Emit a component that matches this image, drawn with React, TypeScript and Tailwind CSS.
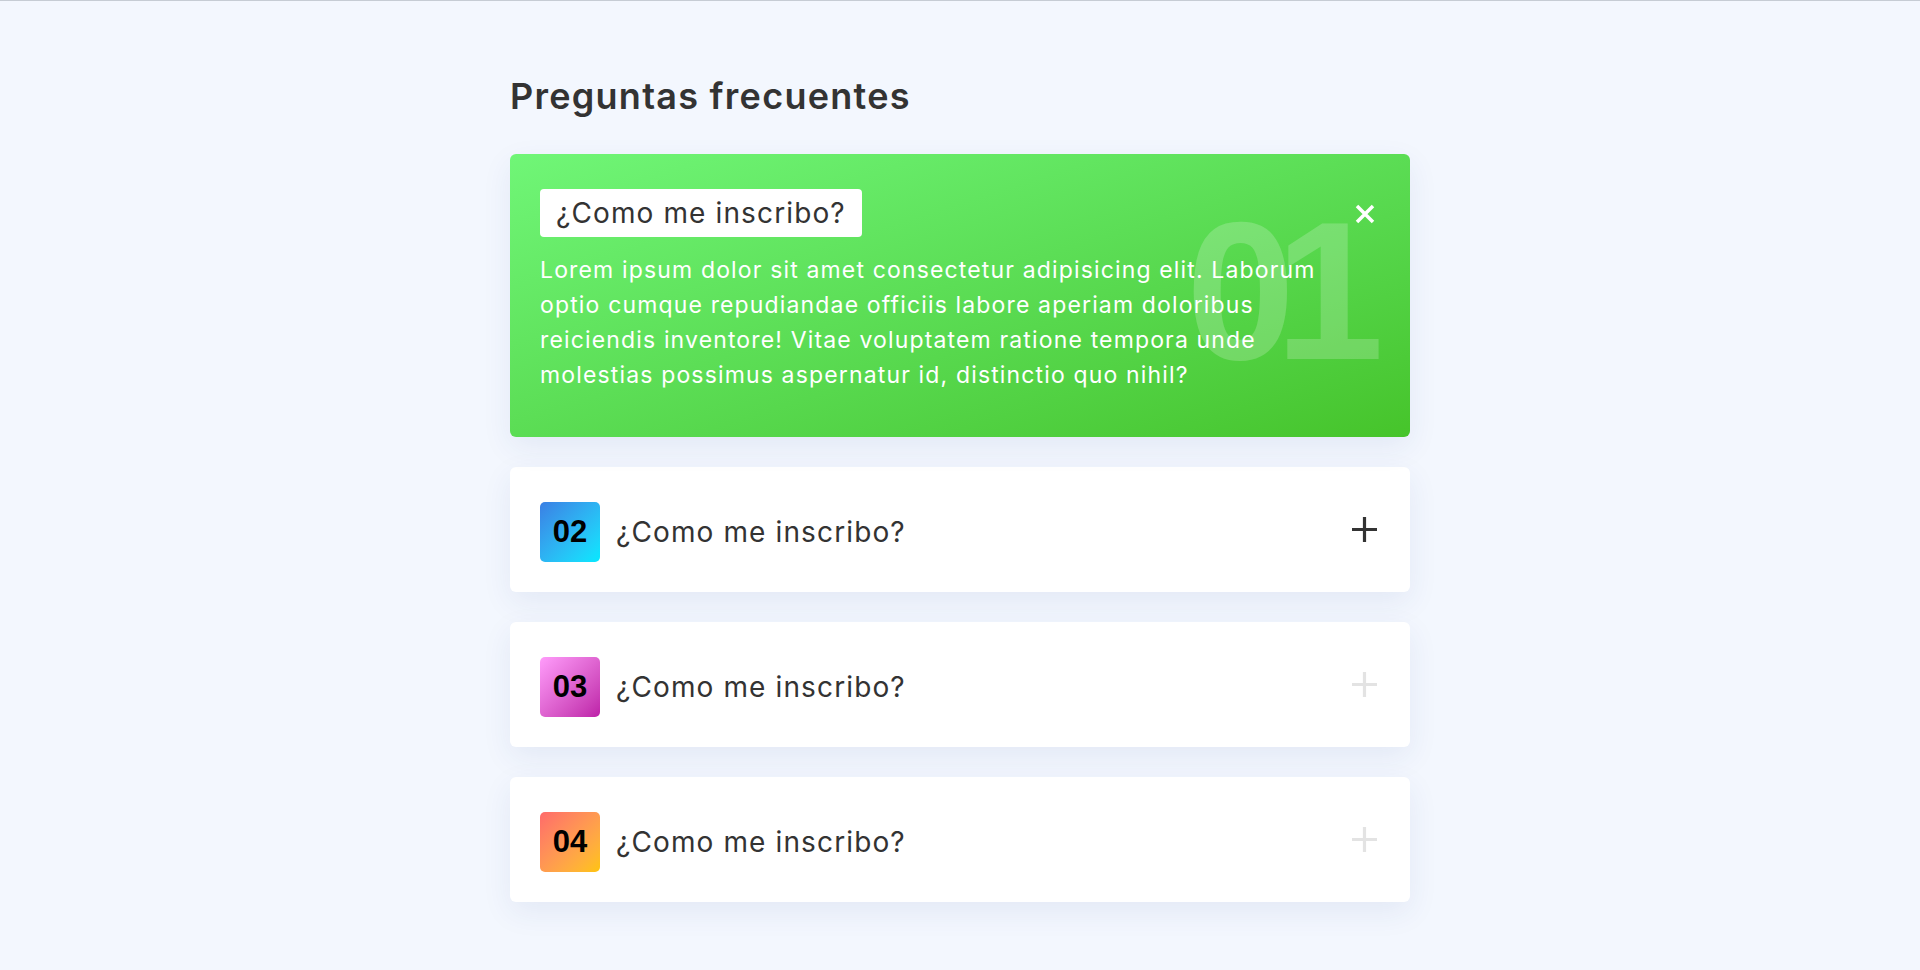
import { useState } from 'react';

type Faq = {
  id: string;
  question: string;
  answer: string[];
  badge: string;
};

const faqs: Faq[] = [
  {
    id: '01',
    question: '¿Como me inscribo?',
    answer: [
      'Lorem ipsum dolor sit amet consectetur adipisicing elit. Laborum',
      'optio cumque repudiandae officiis labore aperiam doloribus',
      'reiciendis inventore! Vitae voluptatem ratione tempora unde',
      'molestias possimus aspernatur id, distinctio quo nihil?',
    ],
    badge: 'bg-gradient-to-br from-[#6ef576] to-[#47c52c]',
  },
  {
    id: '02',
    question: '¿Como me inscribo?',
    answer: [],
    badge: 'bg-gradient-to-br from-[#3a7fe4] to-[#00e9ff]',
  },
  {
    id: '03',
    question: '¿Como me inscribo?',
    answer: [],
    badge: 'bg-gradient-to-br from-[#ff9cfb] to-[#bd1fa8]',
  },
  {
    id: '04',
    question: '¿Como me inscribo?',
    answer: [],
    badge: 'bg-gradient-to-br from-[#ff6a6a] to-[#ffc400]',
  },
];

const CloseIcon = () => (
  <svg width="22" height="22" viewBox="0 0 22 22">
    <path d="M3 3 L19 19 M19 3 L3 19" stroke="white" strokeWidth="3.5" strokeLinecap="butt" />
  </svg>
);

const PlusIcon = ({ dark }: { dark: boolean }) => (
  <svg width="25" height="25" viewBox="0 0 25 25">
    <path d="M12.5 0 V25 M0 12.5 H25" stroke={dark ? '#333333' : '#e3e3e3'} strokeWidth="3.2" />
  </svg>
);

const App = () => {
  const [open, setOpen] = useState('01');

  return (
    <div className="min-h-screen bg-[#f3f7fe] border-t border-[#c6ccd4] font-['Inter','Open_Sans',sans-serif]">
      <main className="w-[900px] mx-auto pt-[71px] pb-16">
        <h2 className="text-[36px] leading-[48px] font-semibold tracking-[0.035em] text-[#333333] mb-[34px]">
          Preguntas frecuentes
        </h2>

        <div className="flex flex-col gap-[30px]">
          {faqs.map((faq, i) =>
            open === faq.id ? (
              <div
                key={faq.id}
                className="relative overflow-hidden rounded-md bg-gradient-to-br from-[#70f677] to-[#46c42a] px-[30px] pt-[35px] pb-[44px] shadow-[0_10px_30px_rgba(40,60,140,0.08)]"
              >
                {/* big faded number behind the answer */}
                <span
                  aria-hidden="true"
                  className="absolute right-[46px] top-[40px] text-[196px] leading-none font-bold text-white/20 tracking-[-20px] font-['Liberation_Sans',sans-serif] select-none"
                >
                  {faq.id}
                </span>
                <button
                  className="absolute right-[34px] top-[49px]"
                  onClick={() => setOpen('')}
                >
                  <CloseIcon />
                </button>
                <div className="relative">
                  <h3 className="inline-block bg-white rounded-sm px-4 h-12 leading-[48px] text-[28px] tracking-[0.04em] text-[#333333]">
                    {faq.question}
                  </h3>
                  <p className="mt-[16px] text-[23px] leading-[35px] tracking-[0.05em] text-white whitespace-nowrap">
                    {faq.answer.map((line) => (
                      <span key={line} className="block">
                        {line}
                      </span>
                    ))}
                  </p>
                </div>
              </div>
            ) : (
              <button
                key={faq.id}
                onClick={() => setOpen(faq.id)}
                className="h-[125px] flex items-center px-[30px] bg-white rounded-md shadow-[0_10px_30px_rgba(40,60,140,0.08)] text-left"
              >
                <span className="flex flex-1 items-center pt-[5px]">
                  <span
                    className={`w-[60px] h-[60px] rounded-[5px] flex items-center justify-center text-[31px] font-bold text-black font-['Liberation_Sans',sans-serif] ${faq.badge}`}
                  >
                    {faq.id}
                  </span>
                  <span className="ml-4 text-[28px] tracking-[0.04em] text-[#333333]">{faq.question}</span>
                </span>
                <span className="mr-[3px]">
                  <PlusIcon dark={i === 1} />
                </span>
              </button>
            )
          )}
        </div>
      </main>
    </div>
  );
};

export default App;
